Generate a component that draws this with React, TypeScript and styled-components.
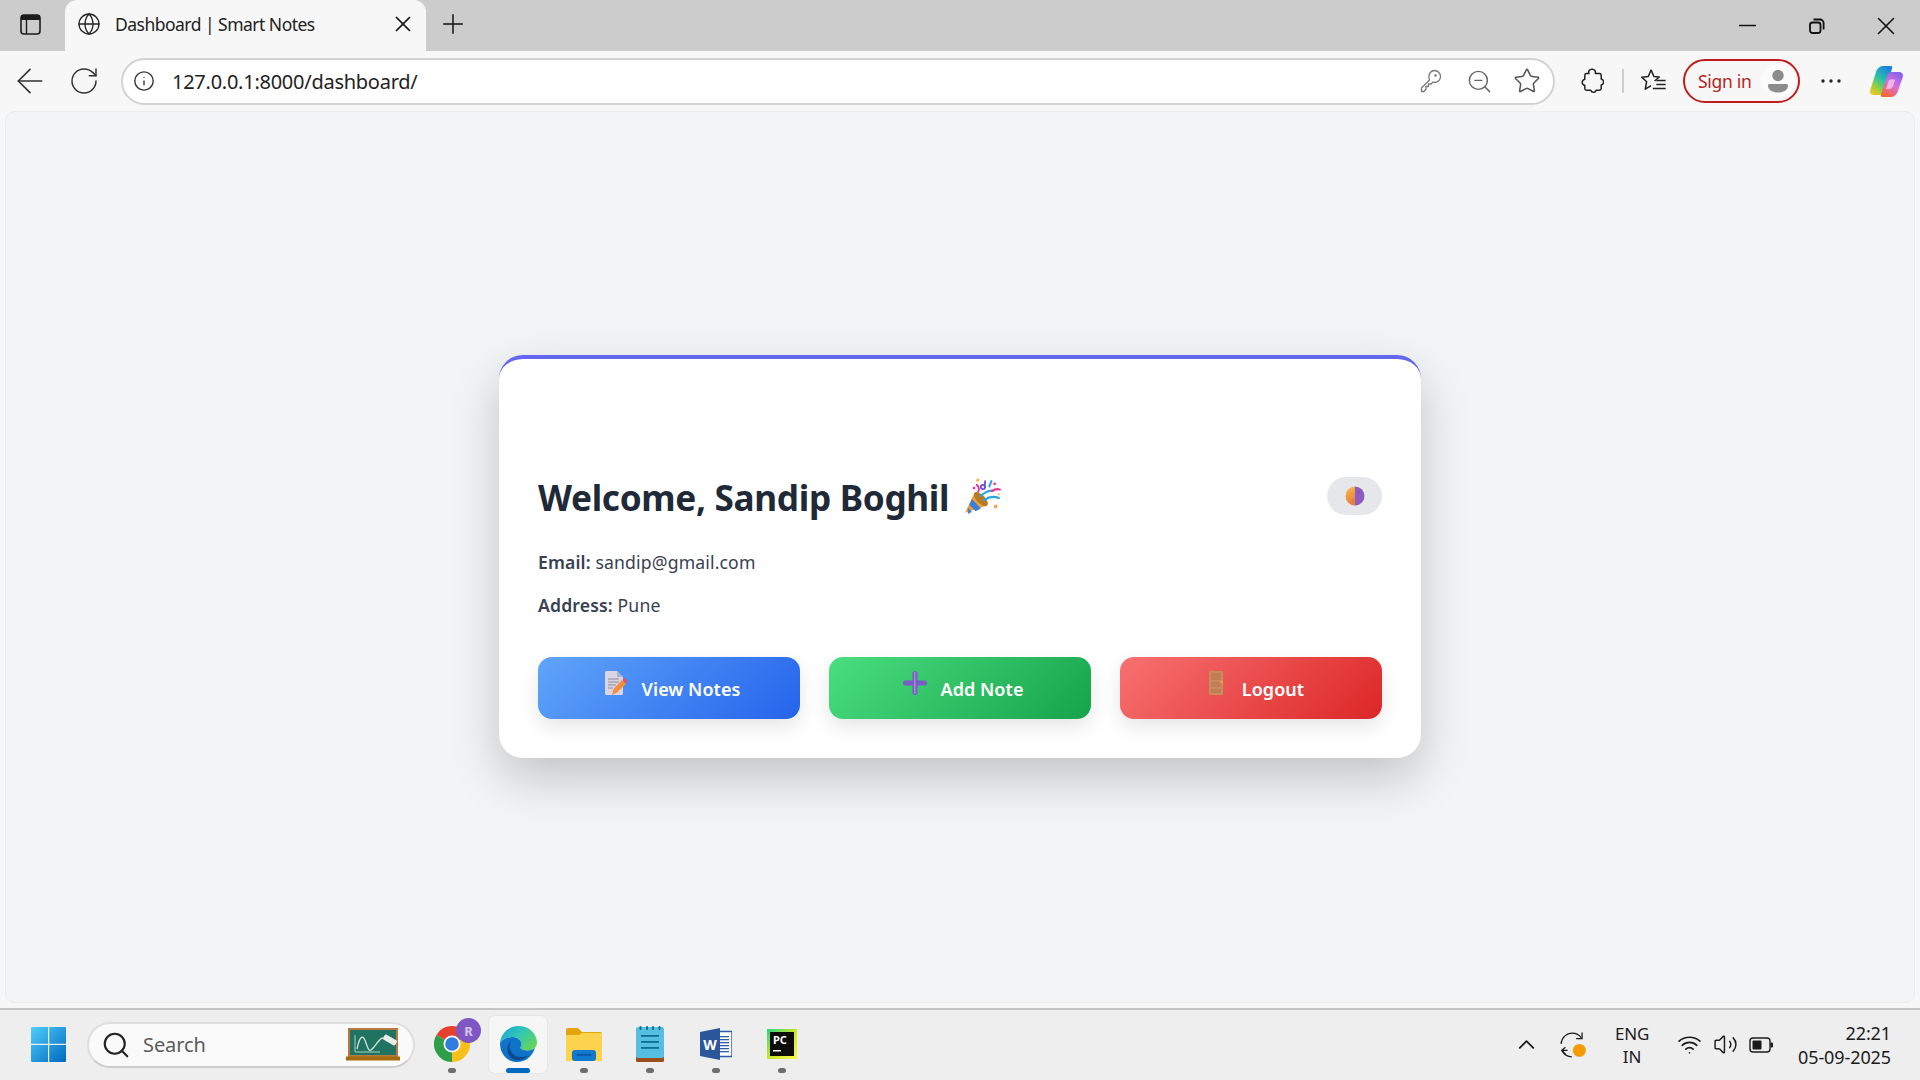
import React from "react";
import styled, { createGlobalStyle } from "styled-components";
import { ArrowLeft, RotateCw, Info, Globe, X, Plus, Minus, ZoomOut, Star, ChevronUp, Wifi, Volume2, Search } from "lucide-react";

const Global = createGlobalStyle`
  html, body { margin: 0; padding: 0; height: 100%; overflow: hidden; }
  body { font-family: "Noto Sans", "Open Sans", sans-serif; background: #f7f7f7; }
  * { box-sizing: border-box; }
`;

const Screen = styled.div`
  width: 1920px; height: 1080px; display: flex; flex-direction: column; background: #f7f7f7;
`;
const TabStrip = styled.div`
  height: 51px; flex: none; display: flex; background: #cccccc; color: #1c1c1c;
`;
const SidebarSlot = styled.div`
  width: 65px; display: flex; align-items: center; padding: 0 0 3px 20px;
`;
const Tab = styled.div`
  width: 361px; display: flex; align-items: center; background: #f7f7f7; border-radius: 12px 12px 0 0;
  padding: 0 10px 3px 12px;
`;
const TabTitle = styled.span`
  flex: 1; margin-left: 14px; font-size: 17.5px; letter-spacing: -0.52px; color: #222; white-space: nowrap;
`;
const NewTabSlot = styled.div`
  width: 54px; display: flex; justify-content: center; align-items: center; padding-bottom: 3px;
`;
const Grow = styled.div` flex: 1; `;
const WinCtl = styled.div`
  width: 69px; display: flex; justify-content: center; align-items: center;
`;
const Toolbar = styled.div`
  height: 60px; flex: none; display: flex; align-items: center; padding-left: 3px; color: #333;
`;
const Slot = styled.div<{ $w?: number; $ml?: number }>`
  width: ${p => p.$w ?? 48}px; margin-left: ${p => p.$ml ?? 0}px; height: 44px; flex: none;
  display: flex; align-items: center; justify-content: center;
`;
const Address = styled.div`
  width: 1434px; height: 47px; margin-left: 10px; flex: none; display: flex; align-items: center;
  background: #fff; border: 2px solid #d2d2d2; border-radius: 24px; padding: 0 2px 0 10px;
`;
const UrlText = styled.span`
  flex: 1; margin-left: 17px; font-size: 20px; letter-spacing: -0.26px; color: #222;
`;
const Sep = styled.div`
  width: 2px; height: 24px; margin-left: 6px; background: #cfcfcf; flex: none;
`;
const SignIn = styled.div`
  width: 117px; height: 44px; margin-left: 5px; flex: none; border: 2px solid #c01c1c; border-radius: 22px;
  display: flex; align-items: center; justify-content: space-between; padding: 0 3px 0 13px;
  color: #b3261e; font-size: 17.5px; letter-spacing: -0.3px;
`;
const Avatar = styled.div`
  width: 34px; height: 34px; border-radius: 50%; background: #fbfbfb; display: flex; align-items: center; justify-content: center;
`;
const Page = styled.main`
  height: 892px; flex: none; margin: 0 5px; padding-bottom: 2px; background: #f3f4f6; border: 1px solid #ececec; border-radius: 10px;
  display: flex; align-items: center; justify-content: center;
`;
const Card = styled.section`
  width: 922px; height: 403px; background: #fff; border-top: 4px solid #6366f1; border-radius: 24px;
  box-shadow: 0 20px 50px rgba(0,0,0,.2); padding: 118px 39px 39px;
  display: flex; flex-direction: column;
`;
const Header = styled.header`
  display: flex; justify-content: space-between; align-items: flex-start; height: 73px; flex: none;
`;
const Title = styled.h1`
  margin: -2px 0 0; display: flex; align-items: center; gap: 15px; font-size: 35.2px; line-height: 45px; font-weight: 700;
  color: #1f2937; letter-spacing: -0.33px;
`;
const Toggle = styled.div`
  width: 55px; height: 38px; border-radius: 19px; background: #e5e7eb; display: flex; align-items: center; justify-content: center;
`;
const InfoLine = styled.p`
  margin: 0 0 19px; font-size: 17.6px; line-height: 24px; color: #374151; letter-spacing: 0.15px;
  b { font-weight: 600; }
`;
const Actions = styled.div`
  margin-top: 21px; display: grid; grid-template-columns: repeat(3, 262px); column-gap: 29px;
`;
const ActionBtn = styled.div<{ $from: string; $to: string }>`
  height: 62px; border-radius: 14px; display: flex; align-items: center; justify-content: center; gap: 14px; padding-left: 6px;
  background: linear-gradient(135deg, ${p => p.$from}, ${p => p.$to});
  box-shadow: 0 8px 20px rgba(0,0,0,.1);
  color: #fff; font-size: 18px; font-weight: 600; letter-spacing: 0.05px;
`;
const BtnIcon = styled.span`
  display: flex; width: 24px; height: 24px; margin-bottom: 9px;
`;
const BtnLabel = styled.span`
  margin-top: 3px;
`;
const Taskbar = styled.footer`
  margin-top: 5px; height: 72px; flex: none; display: flex; align-items: center; background: #eeeeee;
  border-top: 2px solid #c6c6c6; padding: 0 0 1px 31px;
`;
const SearchBox = styled.div`
  width: 328px; height: 46px; margin-left: 21px; flex: none; display: flex; align-items: center;
  background: #fafafa; border: 2px solid #dedede; border-bottom-color: #cdcdcd; border-radius: 23px; padding: 0 13px 0 12px;
  color: #5b5b5b; font-size: 20px;
`;
const SearchLabel = styled.span`
  flex: 1; margin-left: 12px; letter-spacing: -0.1px;
`;
const Apps = styled.div`
  display: flex; margin-left: 4px;
`;
const Tile = styled.div<{ $active?: boolean }>`
  position: relative; width: 58px; height: 57px; margin: 0 4px; padding-top: 10px; border-radius: 6px;
  display: flex; flex-direction: column; align-items: center;
  background: ${p => (p.$active ? "#f6f6f6" : "transparent")};
  box-shadow: ${p => (p.$active ? "0 0 0 1px #e6e6e6" : "none")};
`;
const TileIcon = styled.div`
  height: 36px; flex: none; display: flex; align-items: center; justify-content: center;
`;
const Dot = styled.div<{ $active?: boolean }>`
  width: ${p => (p.$active ? 24 : 8)}px; height: 5px; margin-top: 6px; border-radius: 3px; flex: none;
  background: ${p => (p.$active ? "#0067c0" : "#6e6e6e")};
`;
const RBadge = styled.span`
  position: absolute; top: 2px; right: 0; width: 25px; height: 25px; border-radius: 50%; background: #7e57c2;
  color: #d8c8ef; font-size: 13px; font-weight: 700; display: flex; align-items: center; justify-content: center;
`;
const Tray = styled.div`
  display: flex; align-items: center; padding-right: 29px; color: #1c1c1c;
`;
const TrayIcon = styled.div<{ $w?: number }>`
  width: ${p => p.$w ?? 36}px; flex: none; display: flex; align-items: center; justify-content: center;
`;
const Lang = styled.div`
  width: 52px; margin: 0 13px 0 8px; text-align: center; font-size: 17px; line-height: 23px; letter-spacing: -0.2px;
`;
const Clock = styled.div`
  width: 112px; text-align: right; font-size: 18px; line-height: 24px; letter-spacing: -0.1px;
`;

const SidebarIcon = () => (
  <svg width="21" height="21" viewBox="0 0 21 21" fill="none">
    <rect x="1" y="1" width="19" height="19" rx="3" stroke="#1c1c1c" strokeWidth="1.6" />
    <path d="M1 2.5C1 1.5 2 1 3 1h15c1 0 2 .5 2 1.5V6H1z" fill="#1c1c1c" />
    <path d="M6.5 6v14" stroke="#1c1c1c" strokeWidth="1.4" />
  </svg>
);
const RestoreIcon = () => (
  <svg width="16" height="16" viewBox="0 0 16 16" fill="none" stroke="#111" strokeWidth="1.8">
    <rect x="1" y="4.500" width="10.500" height="10.500" rx="2.500" />
    <path d="M4.500 1.500h6.500a3.600 3.600 0 0 1 3.600 3.600v6.400" />
  </svg>
);
const KeyIcon = () => (
  <svg width="22" height="24" viewBox="0 0 22 24" fill="none" stroke="#777" strokeWidth="1.300" strokeLinejoin="round">
    <path d="M14.500 1.500c3.300 0 6 2.700 6 6s-2.700 6-6 6c-.7 0-1.300-.1-1.800-.3L11 15h-2.500v2.500H6V20l-2 2.500H1.500V19l8-8c-.3-.8-.6-1.700-.6-3.500 0-3.300 2.400-6 5.600-6z" />
    <circle cx="15.500" cy="6.500" r="1.300" fill="#777" stroke="none" />
  </svg>
);
const PuzzleIcon = () => (
  <svg width="24" height="26" viewBox="0 0 24 26" fill="none" stroke="#222" strokeWidth="1.500" strokeLinejoin="round">
    <path d="M9 5.500a3 3 0 0 1 3-4.300 3.200 3.200 0 0 1 3.300 4.300h4.200c1 0 1.700.7 1.700 1.700v3.800a3 3 0 0 1 .6 5.700l-.6.200v3.600c0 1-.7 1.700-1.700 1.700h-3.300a2.800 2.800 0 0 1-5.400 0H6.500c-1 0-1.700-.7-1.700-1.700v-3.200a3 3 0 0 1-.6-5.800l.6-.2V7.200c0-1 .7-1.700 1.700-1.700z" />
  </svg>
);
const FavIcon = () => (
  <svg width="28" height="28" viewBox="0 0 24 24" fill="none" stroke="#222" strokeWidth="1.300" strokeLinejoin="round">
    <path d="M9.500 2.500l2.400 5.600 4.600.5-4 3.400" />
    <path d="M9.500 2.500L7.100 8.100l-5.600.6 4.200 3.900-1.200 6.400 5-3" />
    <path d="M14 11.500h8M14 15h8M11 18.500h11" />
  </svg>
);
const PersonIcon = () => (
  <svg width="20" height="24" viewBox="0 0 20 24" fill="#8c8c8c">
    <circle cx="10" cy="6.500" r="5.700" />
    <path d="M1.500 15h17c.8 0 1.500.7 1.500 1.500 0 4.600-4.500 7-10 7s-10-2.400-10-7C0 15.700.7 15 1.500 15z" />
  </svg>
);
const Copilot = () => (
  <svg width="33" height="31" viewBox="0 0 33 31">
    <defs>
      <linearGradient id="cpA" x1="0.750" y1="0" x2="0.150" y2="1">
        <stop offset="0" stopColor="#1b7fe6" />
        <stop offset="0.450" stopColor="#2cc3a4" />
        <stop offset="0.750" stopColor="#9bd03c" />
        <stop offset="1" stopColor="#f6c423" />
      </linearGradient>
      <linearGradient id="cpB" x1="0.800" y1="0" x2="0.300" y2="1">
        <stop offset="0" stopColor="#8660ee" />
        <stop offset="0.500" stopColor="#d66fdc" />
        <stop offset="1" stopColor="#f4693a" />
      </linearGradient>
    </defs>
    <path d="M13 0h8c1 0 1.500 1 1 2.500L15 25c-.8 2.500-3 4-5.500 4H4c-3 0-4.500-2-3.800-5L6 6c1-3.500 4-6 7-6z" fill="url(#cpA)" />
    <path d="M29 6c3 0 4.500 2 3.800 5L28 25c-1 3.500-4 6-7 6h-9c-1 0-1.500-1-1-2.500L18 8c.4-1.200 1.500-2 3-2z" fill="url(#cpB)" />
    <path d="M19 14c2-1 5-1 6 0l-2 6c-.7 2-2 3-4 3h-3z" fill="#f7c6ee" opacity=".8" />
  </svg>
);
const WinLogo = () => (
  <svg width="35" height="35" viewBox="0 0 35 35">
    <defs>
      <linearGradient id="wl" x1="0" y1="0" x2="1" y2="1">
        <stop offset="0" stopColor="#4fd0fb" />
        <stop offset="1" stopColor="#0067c0" />
      </linearGradient>
    </defs>
    <path d="M1 0h16v16.800H0V1a1 1 0 0 1 1-1zM18.200 0H34a1 1 0 0 1 1 1v15.800H18.200zM0 18h17v17H1a1 1 0 0 1-1-1zM18.200 18H35v16a1 1 0 0 1-1 1H18.200z" fill="url(#wl)" />
  </svg>
);
const Chalkboard = () => (
  <svg width="54" height="33" viewBox="0 0 54 33" fill="none">
    <rect x="2" y="0" width="50" height="29" fill="#b97a3f" />
    <rect x="4" y="2" width="46" height="25" fill="#1f7360" />
    <rect x="0" y="28.500" width="54" height="4" fill="#a5690f" />
    <path d="M9 7v17h25" stroke="#a9d4c4" strokeWidth="1" />
    <path d="M11 21c3-14 6-15 9-6s4 9 8 4 6-9 9-9" stroke="#cfe6dc" strokeWidth="1.300" />
    <rect x="37" y="9" width="14" height="6" rx="1.500" transform="rotate(30 44 12)" fill="#e9ece9" />
  </svg>
);
const Chrome = () => (
  <svg width="36" height="36" viewBox="0 0 36 36">
    <path d="M18 18L2.400 9A18 18 0 0 1 33.600 9z" fill="#e8402f" />
    <path d="M18 18L33.600 9A18 18 0 0 1 18 36z" fill="#f9c01a" />
    <path d="M18 18L18 36A18 18 0 0 1 2.400 9z" fill="#2f9e4a" />
    <circle cx="18" cy="18" r="8.500" fill="#fff" />
    <circle cx="18" cy="18" r="6.800" fill="#2f7de1" />
  </svg>
);
const Edge = () => (
  <svg width="37" height="36" viewBox="0 0 37 36">
    <defs>
      <linearGradient id="egA" x1="0" y1="0" x2="1" y2="0.700">
        <stop offset="0" stopColor="#1b9de2" />
        <stop offset="0.500" stopColor="#30c7b5" />
        <stop offset="1" stopColor="#63d45b" />
      </linearGradient>
    </defs>
    <path d="M0 17C1 7 9 0 18.500 0 29 0 37 7.500 37 16.500c0 5-4 8-9.500 8-3.500 0-7-1.200-7-3 0-1 1-1.200 1-3.500 0-3.500-4-7-8.500-7C7 11 1.500 14 0 17z" fill="url(#egA)" />
    <path d="M12.500 11C7 11 1.500 14 0 17c0 11 7 18.500 16 19 8.500.5 16-4.500 19-14-1.500 1.500-4.500 2.500-7.500 2.500-3.500 0-7-1.200-7-3 0-1 1-1.200 1-3.500 0-3.500-4-7-9-7z" fill="#0f74c8" />
    <path d="M15 13c-6 1.500-7 9-3 14 4 4.500 11 5.500 17 2-5 5-11 6.500-15.500 4.500C6 30 4 17 15 13z" fill="#0a4a90" />
  </svg>
);
const Folder = () => (
  <svg width="36" height="33" viewBox="0 0 36 33">
    <path d="M0 2a2 2 0 0 1 2-2h10l4 4h18a2 2 0 0 1 2 2v6H0z" fill="#e2a50b" />
    <path d="M0 7h13l3-2h19a1 1 0 0 1 1 1v27H0z" fill="#fbd34d" />
    <rect x="6" y="22" width="24" height="11" rx="3" fill="#0f79d0" />
    <rect x="11" y="26" width="14" height="1.500" fill="#0a4f96" />
  </svg>
);
const Notepad = () => (
  <svg width="28" height="36" viewBox="0 0 28 36">
    <rect x="0" y="29" width="28" height="7" rx="1.500" fill="#9a4f1c" />
    <rect x="0" y="1" width="28" height="31" rx="2" fill="#56bfe0" />
    <g fill="#0b6e92">
      <rect x="3.500" y="0" width="2" height="4" rx="1" />
      <rect x="10" y="0" width="2" height="4" rx="1" />
      <rect x="16" y="0" width="2" height="4" rx="1" />
      <rect x="22.500" y="0" width="2" height="4" rx="1" />
      <rect x="5" y="9" width="18" height="1.800" />
      <rect x="5" y="15" width="18" height="1.800" />
      <rect x="5" y="21" width="18" height="1.800" />
    </g>
  </svg>
);
const Word = () => (
  <svg width="32" height="32" viewBox="0 0 32 32">
    <rect x="16" y="3.500" width="16" height="25" fill="#fff" stroke="#2d5fa8" strokeWidth="1.500" />
    <g fill="#2d5fa8">
      <rect x="19" y="8" width="10" height="1.300" />
      <rect x="19" y="11" width="10" height="1.300" />
      <rect x="19" y="14" width="10" height="1.300" />
      <rect x="19" y="17" width="10" height="1.300" />
      <rect x="19" y="20" width="10" height="1.300" />
      <rect x="19" y="23" width="10" height="1.300" />
    </g>
    <path d="M0 4l20-4v32L0 28z" fill="#2b579a" />
    <text x="10" y="21.500" textAnchor="middle" fontFamily="Noto Sans, sans-serif" fontWeight="700" fontSize="14" fill="#fff">W</text>
  </svg>
);
const PyCharm = () => (
  <svg width="30" height="30" viewBox="0 0 30 30">
    <defs>
      <linearGradient id="pc" x1="0" y1="0" x2="1" y2="1">
        <stop offset="0" stopColor="#21d789" />
        <stop offset="0.500" stopColor="#c8e62a" />
        <stop offset="1" stopColor="#fcf84a" />
      </linearGradient>
    </defs>
    <rect width="30" height="30" fill="url(#pc)" />
    <rect x="3" y="3" width="24" height="24" fill="#0c0c0c" />
    <text x="6" y="15" fontFamily="Noto Sans, sans-serif" fontWeight="700" fontSize="11" fill="#fff">PC</text>
    <rect x="6" y="21" width="8" height="1.500" fill="#fff" />
  </svg>
);
const SyncIcon = () => (
  <svg width="28" height="28" viewBox="0 0 26 26" fill="none" stroke="#1c1c1c" strokeWidth="1.200">
    <path d="M1 12C1.500 6 6 2 11 2c4 0 7 1.500 9 4.500" />
    <path d="M20.500 1.500v5.500h-5.500" />
    <path d="M1 18h6M1.500 18l4 4M1.500 18l3.500-3" />
    <path d="M2 18.500C4 22 7 24 11 24" />
    <circle cx="18" cy="18" r="6" fill="#f59b00" stroke="none" />
  </svg>
);
const Battery = () => (
  <svg width="24" height="16" viewBox="0 0 24 16" fill="none">
    <rect x="1" y="1" width="20" height="14" rx="3" stroke="#1c1c1c" strokeWidth="1.400" />
    <rect x="3.500" y="3.500" width="9" height="9" rx="1" fill="#1c1c1c" />
    <rect x="21.500" y="5.500" width="2.500" height="5" rx="1" fill="#1c1c1c" />
  </svg>
);
const Popper = () => (
  <svg width="38" height="38" viewBox="0 0 36 36" fill="none">
    <path d="M1 33L10 14l12 12z" fill="#e9a23b" />
    <path d="M7.500 20l8.500 9-5 2.500-6-6z" fill="#3b7fd9" />
    <path d="M3.500 28l4 4-3.500 2z" fill="#3b7fd9" />
    <ellipse cx="16" cy="20" rx="4" ry="8.500" transform="rotate(-45 16 20)" fill="#b97a26" />
    <path d="M16 17c3-3 7-5 11-5" stroke="#2aa6e8" strokeWidth="2" strokeLinecap="round" />
    <path d="M19 21c4-3 9-4 14-2" stroke="#2aa6e8" strokeWidth="2" strokeLinecap="round" />
    <path d="M18 6.500a2 2 0 1 0 0 4 2 2 0 0 0 0-4zM20 3l-.5 7" stroke="#6a4fd8" strokeWidth="1.700" strokeLinecap="round" />
    <path d="M12 6.500c2 1.500 2.500 4 1.500 6.500" stroke="#f0338f" strokeWidth="1.800" strokeLinecap="round" />
    <path d="M26.500 12.500c2-1.500 5-2.500 7.500-1.500" stroke="#f0338f" strokeWidth="2" strokeLinecap="round" />
    <path d="M24 8l2-5" stroke="#2aa6e8" strokeWidth="2" strokeLinecap="round" />
    <circle cx="9.500" cy="9.500" r="1.300" fill="#f0338f" />
    <circle cx="13" cy="2" r="1.500" fill="#f5b93b" />
    <circle cx="29" cy="5.500" r="1.300" fill="#f0338f" />
    <circle cx="30" cy="27" r="1.800" fill="#f0a860" />
    <circle cx="33" cy="15.500" r="1" fill="#f5b93b" />
  </svg>
);
const Moon = () => (
  <svg width="20" height="20" viewBox="0 0 20 20">
    <defs>
      <clipPath id="mc"><circle cx="10" cy="10" r="9.500" /></clipPath>
      <linearGradient id="my" x1="0" y1="0" x2="0.300" y2="1">
        <stop offset="0" stopColor="#f9c04d" />
        <stop offset="1" stopColor="#e77d3a" />
      </linearGradient>
    </defs>
    <g clipPath="url(#mc)">
      <rect width="10" height="20" fill="url(#my)" />
      <rect x="10" width="10" height="20" fill="#8e5bc0" />
      <circle cx="5" cy="6.500" r="2" fill="#e8a63c" />
      <circle cx="8" cy="14" r="1.200" fill="#d8883a" />
      <circle cx="14" cy="6" r=".8" fill="#7647a8" />
    </g>
  </svg>
);
const MemoIcon = () => (
  <svg width="24" height="24" viewBox="0 0 24 24">
    <path d="M1 1.500A1.500 1.500 0 0 1 2.500 0H13l6 6v16.500a1.500 1.500 0 0 1-1.500 1.500h-15A1.500 1.500 0 0 1 1 22.500z" fill="#d9d5e4" />
    <path d="M13 0l6 6h-6z" fill="#aeb0d2" />
    <path d="M4 8h11M4 11h11M4 14h8M4 17h5" stroke="#8f8ba0" strokeWidth="1" />
    <path d="M8 24l1.500-6L18 9l4 4-9 8.500z" fill="#f58f3c" />
    <path d="M18.500 8.500l2-1.500 3 3-1.500 2.500z" fill="#ef5350" />
  </svg>
);
const PlusIcon = () => (
  <svg width="24" height="24" viewBox="0 0 24 24">
    <rect x="9.500" y="0" width="5" height="24" rx="2.500" fill="#7b5bc4" />
    <rect x="0" y="9.500" width="24" height="5" rx="2.500" fill="#7b5bc4" />
    <rect x="11" y="1" width="1.500" height="22" fill="#a38ae0" />
  </svg>
);
const DoorIcon = () => (
  <svg width="24" height="24" viewBox="0 0 24 24">
    <rect x="5" y="0" width="14" height="24" fill="#c98a5c" />
    <rect x="7" y="2" width="10" height="7" fill="#bf7e55" />
    <rect x="7" y="11" width="10" height="5" fill="#bf7e55" />
    <rect x="7" y="18" width="10" height="4" fill="#bf7e55" />
    <rect x="16.500" y="10" width="2.500" height="2" fill="#f7a738" />
  </svg>
);

export default function App() {
  return (
    <Screen>
      <Global />
      <TabStrip>
        <SidebarSlot><SidebarIcon /></SidebarSlot>
        <Tab>
          <Globe size={24} strokeWidth={1.3} color="#222" />
          <TabTitle>Dashboard | Smart Notes</TabTitle>
          <X size={26} strokeWidth={1.6} color="#111" />
        </Tab>
        <NewTabSlot><Plus size={32} strokeWidth={1.1} color="#111" /></NewTabSlot>
        <Grow />
        <WinCtl><Minus size={27} strokeWidth={1.4} color="#111" /></WinCtl>
        <WinCtl><RestoreIcon /></WinCtl>
        <WinCtl><X size={30} strokeWidth={1.3} color="#111" /></WinCtl>
      </TabStrip>
      <Toolbar>
        <Slot $w={54}><ArrowLeft size={40} strokeWidth={1} /></Slot>
        <Slot $w={54}><RotateCw size={32} strokeWidth={1.1} /></Slot>
        <Address>
          <Info size={22} strokeWidth={1.5} color="#333" />
          <UrlText>127.0.0.1:8000/dashboard/</UrlText>
          <Slot><KeyIcon /></Slot>
          <Slot><ZoomOut size={27} strokeWidth={1.3} color="#666" /></Slot>
          <Slot><Star size={28} strokeWidth={1.3} color="#555" /></Slot>
        </Address>
        <Slot $ml={13}><PuzzleIcon /></Slot>
        <Sep />
        <Slot $ml={6}><FavIcon /></Slot>
        <SignIn>Sign in<Avatar><PersonIcon /></Avatar></SignIn>
        <Slot $ml={7}>
          <svg width="20" height="4" viewBox="0 0 20 4" fill="#222"><circle cx="2" cy="2" r="1.700" /><circle cx="10" cy="2" r="1.700" /><circle cx="18" cy="2" r="1.700" /></svg>
        </Slot>
        <Slot $ml={7}><Copilot /></Slot>
      </Toolbar>
      <Page>
        <Card>
          <Header>
            <Title>Welcome, Sandip Boghil <Popper /></Title>
            <Toggle><Moon /></Toggle>
          </Header>
          <InfoLine><b>Email:</b> sandip@gmail.com</InfoLine>
          <InfoLine><b>Address:</b> Pune</InfoLine>
          <Actions>
            <ActionBtn $from="#60a5fa" $to="#2563eb"><BtnIcon><MemoIcon /></BtnIcon><BtnLabel>View Notes</BtnLabel></ActionBtn>
            <ActionBtn $from="#4ade80" $to="#16a34a"><BtnIcon><PlusIcon /></BtnIcon><BtnLabel>Add Note</BtnLabel></ActionBtn>
            <ActionBtn $from="#f87171" $to="#dc2626"><BtnIcon><DoorIcon /></BtnIcon><BtnLabel>Logout</BtnLabel></ActionBtn>
          </Actions>
        </Card>
      </Page>
      <Taskbar>
        <WinLogo />
        <SearchBox>
          <Search size={30} strokeWidth={1.7} color="#222" />
          <SearchLabel>Search</SearchLabel>
          <Chalkboard />
        </SearchBox>
        <Apps>
          <Tile><TileIcon><Chrome /></TileIcon><RBadge>R</RBadge><Dot /></Tile>
          <Tile $active><TileIcon><Edge /></TileIcon><Dot $active /></Tile>
          <Tile><TileIcon><Folder /></TileIcon><Dot /></Tile>
          <Tile><TileIcon><Notepad /></TileIcon><Dot /></Tile>
          <Tile><TileIcon><Word /></TileIcon><Dot /></Tile>
          <Tile><TileIcon><PyCharm /></TileIcon><Dot /></Tile>
        </Apps>
        <Grow />
        <Tray>
          <TrayIcon $w={48}><ChevronUp size={27} strokeWidth={1.6} /></TrayIcon>
          <TrayIcon $w={48}><SyncIcon /></TrayIcon>
          <Lang>ENG<br />IN</Lang>
          <TrayIcon><Wifi size={25} strokeWidth={1.6} /></TrayIcon>
          <TrayIcon><Volume2 size={25} strokeWidth={1.4} /></TrayIcon>
          <TrayIcon><Battery /></TrayIcon>
          <Clock>22:21<br />05-09-2025</Clock>
        </Tray>
      </Taskbar>
    </Screen>
  );
}
